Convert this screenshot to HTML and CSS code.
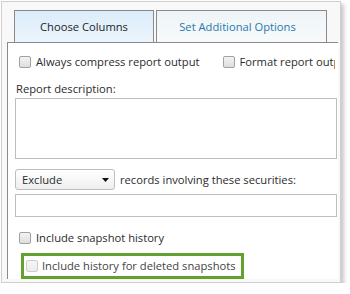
FILE: index.html
```html
<!DOCTYPE html>
<html lang="en">
<head>
  <meta charset="UTF-8" />
  <title>Report Options</title>
  <link rel="stylesheet" href="styles.css">
</head>
<body>
  <div class="dialog">
    <!-- Tabs -->
    <div class="tabs">
      <div class="tab active">Choose Columns</div>
      <div class="tab">Set Additional Options</div>
    </div>

    <!-- Tab panel -->
    <div class="panel">
      <div class="option-row">
        <label class="check"><input type="checkbox" />Always compress report output</label>
        <label class="check"><input type="checkbox" />Format report output</label>
      </div>

      <div class="field-label">Report description:</div>
      <textarea class="description"></textarea>

      <div class="filter-row">
        <div class="select">
          <span>Exclude</span>
          <svg class="caret" width="7" height="4" viewBox="0 0 7 4"><path d="M0 0h7L3.5 4z" fill="#111"/></svg>
        </div>
        <span>records involving these securities:</span>
      </div>
      <input class="securities" type="text" />

      <label class="check snapshot"><input type="checkbox" />Include snapshot history</label>

      <!-- highlighted option -->
      <div class="highlight">
        <label class="check disabled"><input type="checkbox" disabled />Include history for deleted snapshots</label>
      </div>
    </div>
  </div>
</body>
</html>
```

FILE: styles.css
```css
/********************************************************
 * Page + dialog frame
 ********************************************************/
body {
  margin: 0;
  background-color: #fff;
  font-family: "Open Sans", "Liberation Sans", sans-serif;
  font-size: 11.2px;
  color: #2b2b2b;
}

.dialog {
  width: 340px;
  height: 282px;
  box-sizing: border-box;
  margin: 1px 0 0 1px;
  padding: 8px 0 0 0;
  background-color: #f8f8f8;
  border: 1px solid #cfcfcf;
  box-shadow: 3px 3px 4px rgba(0,0,0,0.22);
}

/********************************************************
 * Tabs
 ********************************************************/
.tabs {
  display: flex;
  gap: 2px;
  padding-left: 12px;
}

.tab {
  height: 32px;
  box-sizing: border-box;
  border: 1px solid #8a8a8a;
  border-bottom: none;
  line-height: 31px;
  text-align: center;
  color: #2a77ad;
  background: linear-gradient(#eef4f6, #f7fafb);
  width: 171px;
  padding-right: 8px;
}
.tab.active {
  width: 140px;
  padding-right: 0;
  color: #1e1e1e;
  background: linear-gradient(#dbecfa, #ecf5fd);
}

/********************************************************
 * Panel
 ********************************************************/
.panel {
  width: 331px;
  box-sizing: border-box;
  margin-left: 5px;
  padding-left: 7px;
  background-color: #fff;
  border-top: 1px solid #8a8a8a;
  border-left: 1px solid #8a8a8a;
}

.check {
  display: flex;
  align-items: center;
  white-space: nowrap;
  line-height: 16px;
}
.check input {
  appearance: none;
  width: 12px;
  height: 12px;
  margin: 0 5px 0 4px;
  border: 1px solid #a2a2a2;
  border-radius: 2px;
  background: linear-gradient(#f3f3f3, #dedede);
  flex: none;
}
.check.disabled {
  color: #444;
}
.check.disabled input {
  margin: 0 4px 0 2px;
  border-color: #cdcdcd;
  background: linear-gradient(#f6f6f6, #ececec);
}

/* second option runs past the panel edge and is cut */
.option-row {
  display: flex;
  gap: 19px;
  width: 320px;
  overflow: hidden;
  padding-top: 11px;
}

.field-label {
  margin-top: 11px;
  line-height: 16px;
  padding-left: 1px;
}

.description {
  display: block;
  width: 322px;
  height: 61px;
  box-sizing: border-box;
  margin: 1px 0 0 0;
  border: 1px solid #bdbdbd;
  resize: none;
}

.filter-row {
  display: flex;
  align-items: center;
  gap: 5px;
  margin-top: 10px;
}

.select {
  width: 100px;
  height: 21px;
  box-sizing: border-box;
  display: flex;
  align-items: center;
  justify-content: space-between;
  padding: 0 5px 0 6px;
  border: 1px solid #bdbdbd;
  border-radius: 3px;
  background: linear-gradient(#ffffff, #efefef);
}

.securities {
  display: block;
  width: 322px;
  height: 23px;
  box-sizing: border-box;
  margin: 4px 0 0 0;
  border: 1px solid #bdbdbd;
}

.snapshot {
  margin-top: 13px;
}

.highlight {
  width: 223px;
  height: 26px;
  box-sizing: border-box;
  margin: 7px 0 0 6px;
  border: 3px solid #62a12f;
  display: flex;
  align-items: center;
}
```
